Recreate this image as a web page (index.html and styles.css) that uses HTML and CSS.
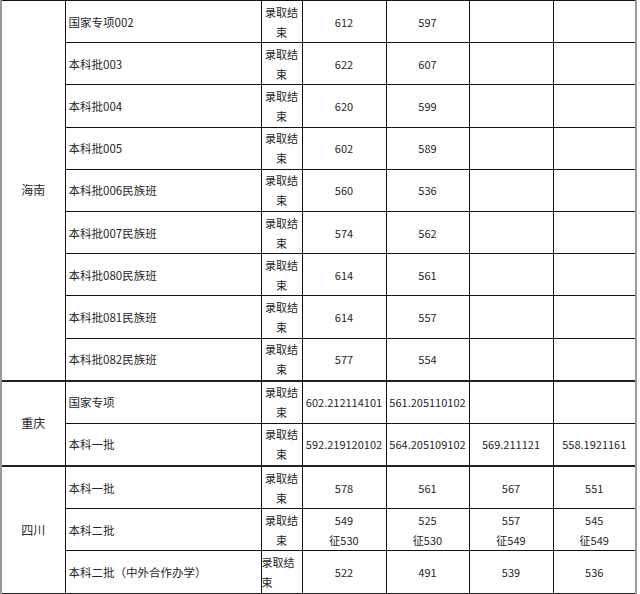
FILE: index.html
```html
<!DOCTYPE html>
<html lang="zh">
<head>
<meta charset="utf-8">
<link rel="stylesheet" href="styles.css">
</head>
<body>
<div class="wrap">
<table class="score">
<colgroup>
<col class="c1"><col class="c2"><col class="c3"><col class="c4"><col class="c5"><col class="c6"><col class="c7">
</colgroup>
<tbody>
<tr class="prov-first"><td class="prov" rowspan="9">海南</td><td class="name">国家专项002</td><td class="st">录取结束</td><td>612</td><td>597</td><td></td><td></td></tr>
<tr><td class="name">本科批003</td><td class="st">录取结束</td><td>622</td><td>607</td><td></td><td></td></tr>
<tr><td class="name">本科批004</td><td class="st">录取结束</td><td>620</td><td>599</td><td></td><td></td></tr>
<tr><td class="name">本科批005</td><td class="st">录取结束</td><td>602</td><td>589</td><td></td><td></td></tr>
<tr><td class="name">本科批006民族班</td><td class="st">录取结束</td><td>560</td><td>536</td><td></td><td></td></tr>
<tr><td class="name">本科批007民族班</td><td class="st">录取结束</td><td>574</td><td>562</td><td></td><td></td></tr>
<tr><td class="name">本科批080民族班</td><td class="st">录取结束</td><td>614</td><td>561</td><td></td><td></td></tr>
<tr><td class="name">本科批081民族班</td><td class="st">录取结束</td><td>614</td><td>557</td><td></td><td></td></tr>
<tr><td class="name">本科批082民族班</td><td class="st">录取结束</td><td>577</td><td>554</td><td></td><td></td></tr>
<tr class="sep"><td class="prov" rowspan="2">重庆</td><td class="name">国家专项</td><td class="st">录取结束</td><td>602.212114101</td><td>561.205110102</td><td></td><td></td></tr>
<tr><td class="name">本科一批</td><td class="st">录取结束</td><td>592.219120102</td><td>564.205109102</td><td>569.211121</td><td>558.1921161</td></tr>
<tr class="sep"><td class="prov" rowspan="3">四川</td><td class="name">本科一批</td><td class="st">录取结束</td><td>578</td><td>561</td><td>567</td><td>551</td></tr>
<tr><td class="name">本科二批</td><td class="st">录取结束</td><td>549<br>征530</td><td>525<br>征530</td><td>557<br>征549</td><td>545<br>征549</td></tr>
<tr><td class="name">本科二批（中外合作办学）</td><td class="st left">录取结束</td><td>522</td><td>491</td><td>539</td><td>536</td></tr>
<tr class="sep"><td class="prov"></td><td class="name"></td><td class="st"></td><td></td><td></td><td></td><td></td></tr>
</tbody>
</table>
</div>
</body>
</html>
```

FILE: styles.css
```css
html, body {
  margin: 0;
  padding: 0;
  background: #fff;
}
.wrap {
  width: 640px;
  height: 594px;
  overflow: hidden;
}
.score {
  border-collapse: collapse;
  table-layout: fixed;
  width: 637px;
  font-family: "Noto Sans CJK SC", sans-serif;
  font-size: 11px;
  line-height: 20px;
  color: #262626;
  border-left: 2px solid #9a9a9a;
  border-right: 2px solid #9a9a9a;
}
.c1 { width: 64px; }
.c2 { width: 196px; }
.c3 { width: 41px; }
.c4 { width: 84px; }
.c5 { width: 83px; }
.c6 { width: 84px; }
.c7 { width: 83px; }
.score td {
  border: 1px solid #111;
  height: 41.2px;
  padding: 0;
  text-align: center;
  vertical-align: middle;
  white-space: normal;
  overflow: hidden;
}
.score td.prov {
  border-left: 2px solid #9a9a9a;
  font-size: 12px;
}
.score td.name {
  text-align: left;
  padding-left: 3px;
  font-size: 11.5px;
}
.score td.st {
  padding: 0 2px;
}
.score td.st.left {
  text-align: left;
  padding: 0;
}
.score tr.sep td {
  border-top: 2px solid #222;
}
.score td:last-child {
  border-right: 2px solid #9a9a9a;
}
```
